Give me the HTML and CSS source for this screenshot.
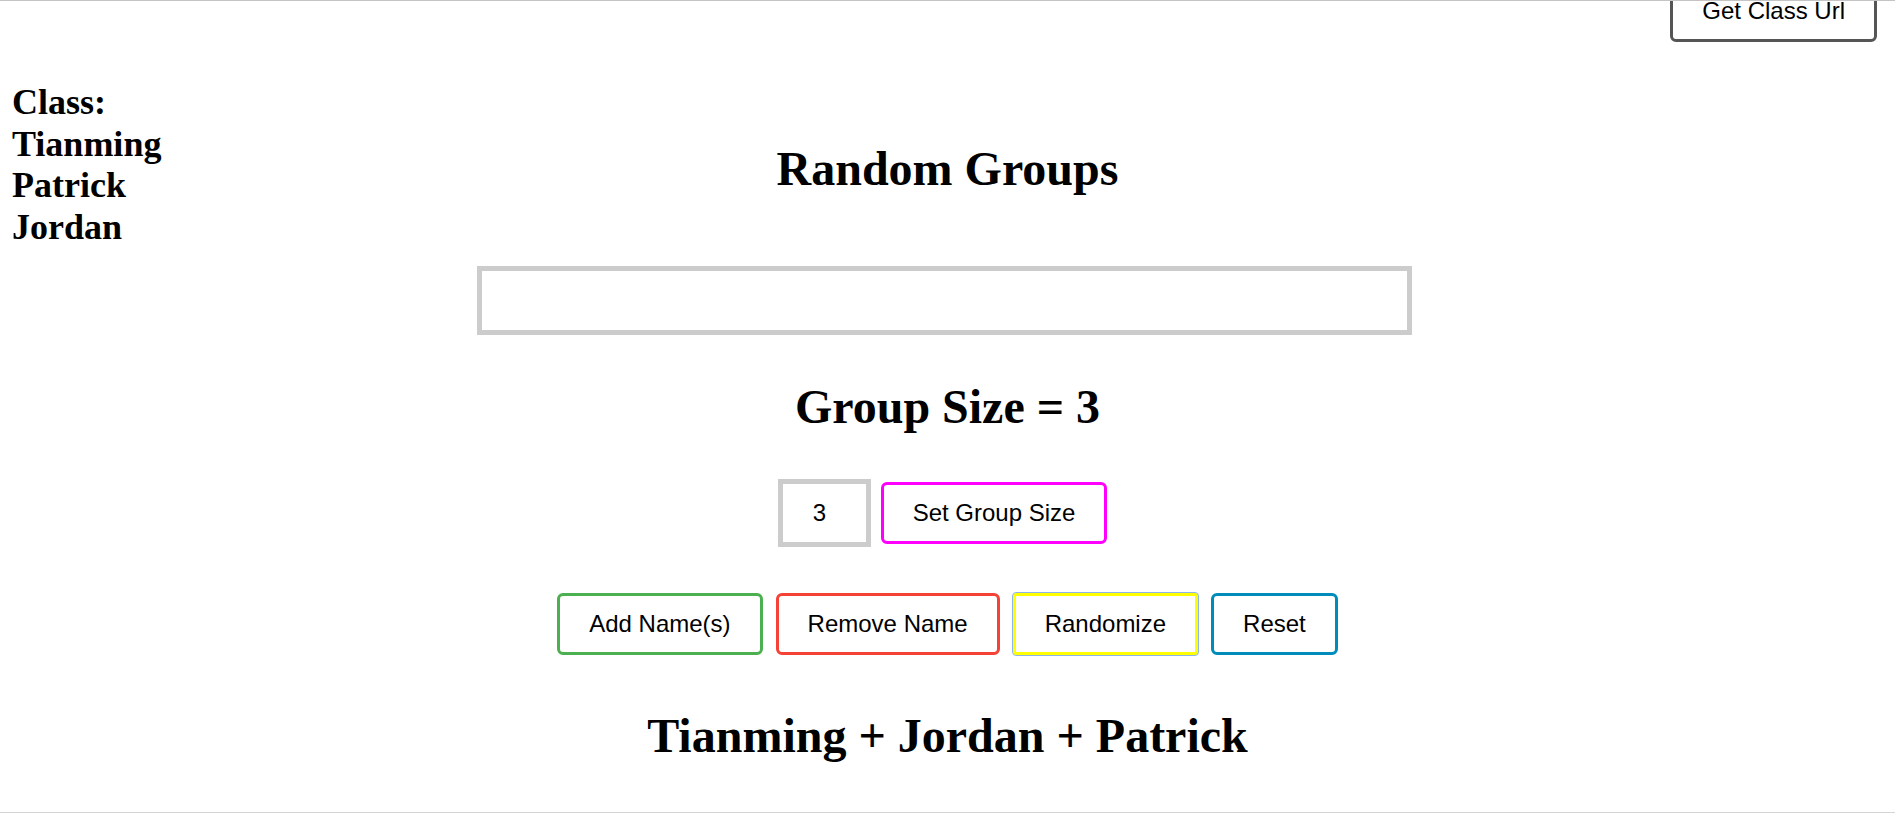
FILE: index.html
```html
<!DOCTYPE html>
<html lang="en">
<head>
<meta charset="utf-8">
<title>Random Groups</title>
<link rel="stylesheet" href="styles.css">
</head>
<body>
<div class="frame-top"></div>
<header class="topbar">
  <button class="btn btn-url">Get Class Url</button>
</header>
<div class="layout">
  <aside class="sidebar">
    <h2 class="class-title">Class:</h2>
    <div class="class-name">Tianming</div>
    <div class="class-name">Patrick</div>
    <div class="class-name">Jordan</div>
  </aside>
  <main class="main">
    <h1 class="heading heading-title">Random Groups</h1>
    <input class="names-input" type="text" aria-label="Names">
    <h1 class="heading heading-size">Group Size = 3</h1>
    <div class="size-row">
      <input class="size-input" type="number" value="3" aria-label="Group size">
      <button class="btn btn-size">Set Group Size</button>
    </div>
    <div class="action-row">
      <button class="btn btn-add">Add Name(s)</button>
      <button class="btn btn-remove">Remove Name</button>
      <button class="btn btn-random">Randomize</button>
      <button class="btn btn-reset">Reset</button>
    </div>
    <h1 class="heading heading-result">Tianming + Jordan + Patrick</h1>
  </main>
</div>
<div class="frame-bottom"></div>
</body>
</html>
```
FILE: styles.css
```css
html, body {
  margin: 0;
  padding: 0;
  background: #ffffff;
}

body {
  font-family: "Liberation Serif", "Times New Roman", serif;
  color: #000;
  overflow: hidden;
  height: 815px;
}

.frame-top {
  position: fixed;
  left: 0;
  right: 0;
  top: 0;
  height: 1px;
  background: #c4c4c4;
  z-index: 5;
}

.frame-bottom {
  position: fixed;
  left: 0;
  right: 0;
  top: 812px;
  height: 1px;
  background: #d4d4d4;
  z-index: 5;
}

.topbar {
  display: flex;
  justify-content: flex-end;
  padding-right: 18px;
  margin-top: -20px;
}

.btn {
  font-family: "Liberation Sans", Arial, sans-serif;
  font-size: 24px;
  line-height: 28px;
  padding: 14px 29px;
  border: 3px solid #555;
  border-radius: 6px;
  background: #fff;
  color: #000;
  cursor: pointer;
  white-space: nowrap;
}

.btn-url { border-color: #555555; }
.btn-size { border-color: #ff00ff; }
.btn-add { border-color: #4caf50; }
.btn-remove { border-color: #f44336; }
.btn-random {
  border-color: #ffff00;
  border-radius: 3px;
  outline: 1px solid #8eb4ee;
}
.btn-reset { border-color: #008cba; }

.layout {
  display: grid;
  grid-template-columns: 1fr 1100px 1fr;
  margin-top: -2px;
}

.sidebar {
  grid-column: 1;
  grid-row: 1;
  padding: 42px 0 0 12px;
  font-size: 36px;
  font-weight: bold;
  line-height: 41.6px;
}

.class-title {
  margin: 0;
  font-size: 36px;
  line-height: 41.6px;
}

.main {
  grid-column: 2;
  grid-row: 1;
  display: flex;
  flex-direction: column;
  align-items: center;
}

.heading {
  margin: 0;
  font-size: 48px;
  font-weight: bold;
  line-height: 55px;
  white-space: nowrap;
}

.heading-title { margin-top: 101px; }
.heading-size { margin-top: 44px; }
.heading-result { margin-top: 53px; }

.names-input {
  box-sizing: border-box;
  width: 935px;
  height: 69px;
  margin: 70px 6px 0 0;
  border: 5px solid #cccccc;
  background: #fff;
  font-family: "Liberation Sans", Arial, sans-serif;
  font-size: 24px;
  padding: 0 10px;
  outline: none;
}

.size-row {
  display: flex;
  align-items: center;
  gap: 10px;
  margin: 45px 10px 0 0;
}

.size-input {
  box-sizing: border-box;
  width: 93px;
  height: 68px;
  border: 5px solid #cccccc;
  padding: 0 0 0 30px;
  font-family: "Liberation Sans", Arial, sans-serif;
  font-size: 24px;
  color: #000;
  background: #fff;
  -moz-appearance: textfield;
  appearance: textfield;
  outline: none;
}

.size-input::-webkit-inner-spin-button,
.size-input::-webkit-outer-spin-button {
  -webkit-appearance: none;
  margin: 0;
}

.action-row {
  display: flex;
  align-items: center;
  gap: 13px;
  margin-top: 46px;
}
```
